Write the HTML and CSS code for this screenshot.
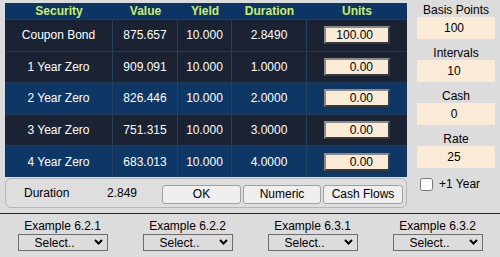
FILE: index.html
```html
<!DOCTYPE html>
<html lang="en">
<head>
    <meta charset="UTF-8">
    <meta name="viewport" content="width=device-width, initial-scale=1.0">
    <title>Duration</title>
    <link rel="stylesheet" href="styles.css">
</head>
<body>
    <div class="app">
        <div class="main">
            <div class="sheet">
                <div class="row head">
                    <div class="cell">Security</div>
                    <div class="cell">Value</div>
                    <div class="cell">Yield</div>
                    <div class="cell">Duration</div>
                    <div class="cell">Units</div>
                </div>
                <div class="row dark">
                    <div class="cell">Coupon Bond</div>
                    <div class="cell">875.657</div>
                    <div class="cell">10.000</div>
                    <div class="cell">2.8490</div>
                    <div class="cell"><input class="units" type="text" value="100.00"></div>
                </div>
                <div class="row dark">
                    <div class="cell">1 Year Zero</div>
                    <div class="cell">909.091</div>
                    <div class="cell">10.000</div>
                    <div class="cell">1.0000</div>
                    <div class="cell"><input class="units" type="text" value="0.00"></div>
                </div>
                <div class="row blue">
                    <div class="cell">2 Year Zero</div>
                    <div class="cell">826.446</div>
                    <div class="cell">10.000</div>
                    <div class="cell">2.0000</div>
                    <div class="cell"><input class="units" type="text" value="0.00"></div>
                </div>
                <div class="row dark">
                    <div class="cell">3 Year Zero</div>
                    <div class="cell">751.315</div>
                    <div class="cell">10.000</div>
                    <div class="cell">3.0000</div>
                    <div class="cell"><input class="units" type="text" value="0.00"></div>
                </div>
                <div class="row blue">
                    <div class="cell">4 Year Zero</div>
                    <div class="cell">683.013</div>
                    <div class="cell">10.000</div>
                    <div class="cell">4.0000</div>
                    <div class="cell"><input class="units" type="text" value="0.00"></div>
                </div>
            </div>
            <div class="bar">
                <span class="dur-label">Duration</span>
                <span class="dur-value">2.849</span>
                <div class="buttons">
                    <button type="button" class="btn ok">OK</button>
                    <button type="button" class="btn numeric">Numeric</button>
                    <button type="button" class="btn flows">Cash Flows</button>
                </div>
            </div>
        </div>

        <div class="side">
            <div class="field">
                <label for="bp">Basis Points</label>
                <input id="bp" class="box" type="text" value="100">
            </div>
            <div class="field">
                <label for="iv">Intervals</label>
                <input id="iv" class="box" type="text" value="10">
            </div>
            <div class="field">
                <label for="cash">Cash</label>
                <input id="cash" class="box" type="text" value="0">
            </div>
            <div class="field">
                <label for="rate">Rate</label>
                <input id="rate" class="box" type="text" value="25">
            </div>
            <label class="check"><input type="checkbox"><span>+1 Year</span></label>
        </div>
    </div>

    <div class="examples">
        <div class="example">
            <div class="ex-title">Example 6.2.1</div>
            <div class="pick">
                <select><option>Select..</option></select>
                <svg class="chev" width="9" height="6" viewBox="0 0 9 6"><polyline points="1,1 4.5,4.5 8,1" fill="none" stroke="#000" stroke-width="2"/></svg>
            </div>
        </div>
        <div class="example">
            <div class="ex-title">Example 6.2.2</div>
            <div class="pick">
                <select><option>Select..</option></select>
                <svg class="chev" width="9" height="6" viewBox="0 0 9 6"><polyline points="1,1 4.5,4.5 8,1" fill="none" stroke="#000" stroke-width="2"/></svg>
            </div>
        </div>
        <div class="example">
            <div class="ex-title">Example 6.3.1</div>
            <div class="pick">
                <select><option>Select..</option></select>
                <svg class="chev" width="9" height="6" viewBox="0 0 9 6"><polyline points="1,1 4.5,4.5 8,1" fill="none" stroke="#000" stroke-width="2"/></svg>
            </div>
        </div>
        <div class="example">
            <div class="ex-title">Example 6.3.2</div>
            <div class="pick">
                <select><option>Select..</option></select>
                <svg class="chev" width="9" height="6" viewBox="0 0 9 6"><polyline points="1,1 4.5,4.5 8,1" fill="none" stroke="#000" stroke-width="2"/></svg>
            </div>
        </div>
    </div>
</body>
</html>
```

FILE: styles.css
```css
body {
    margin: 0;
    padding: 0;
    background-color: #dcdcdc;
    color: #000;
    font-family: "Liberation Sans", Arial, sans-serif;
    font-size: 12px;
}
.app {
    display: flex;
    gap: 10px;
    padding: 3px 0 0 5px;
}
.main {
    width: 402px;
}
.sheet {
    display: flex;
    flex-direction: column;
    height: 174px;
}
.row {
    display: grid;
    grid-template-columns: 108px 65px 54px 75px 100px;
    flex: 1;
    color: #fff;
    font-size: 12px;
}
.row.head {
    flex: 0 0 16px;
    background: #0c3566;
    color: #ccee66;
    font-weight: bold;
}
.row.dark {
    background: #1b2332;
    border-top: 1px solid #233a58;
}
.row.blue {
    background: #0f3766;
    border-top: 1px solid #233a58;
}
.cell {
    display: flex;
    align-items: center;
    justify-content: center;
}
.row.dark .cell,
.row.blue .cell {
    border-right: 1px solid #253f60;
}
.row .cell:last-child {
    border-right: none;
}
.units {
    box-sizing: border-box;
    width: 66px;
    height: 18px;
    padding: 0 15px 0 0;
    border: 2px solid;
    border-color: #8a8a8a #3a3a3a #3a3a3a #8a8a8a;
    background: #faebd7;
    font-family: inherit;
    font-size: 12px;
    text-align: right;
    color: #000;
}
.bar {
    box-sizing: border-box;
    display: flex;
    align-items: center;
    height: 30px;
    margin-top: 1px;
    padding: 0 0 0 18px;
    border: 1px solid #b4b4b4;
    border-radius: 6px;
    background: #dedede;
}
.dur-label {
    width: 83px;
}
.dur-value {
    width: 55px;
}
.buttons {
    display: flex;
    gap: 2px;
    margin-top: 2px;
}
.btn {
    box-sizing: border-box;
    height: 19px;
    padding: 0;
    border: 1px solid #a0a0a0;
    border-radius: 3px;
    background: #efefef;
    font-family: inherit;
    font-size: 12px;
    color: #000;
}
.btn.ok {
    width: 79px;
}
.btn.numeric {
    width: 78px;
}
.btn.flows {
    width: 80px;
}
.side {
    display: flex;
    flex-direction: column;
    width: 78px;
}
.field {
    display: flex;
    flex-direction: column;
    margin-bottom: 7px;
}
.field label {
    line-height: 14px;
    text-align: center;
}
.box {
    box-sizing: border-box;
    height: 22px;
    width: 78px;
    padding: 0 4px 0 0;
    border: none;
    background: #faebd7;
    font-family: inherit;
    font-size: 12px;
    text-align: center;
    color: #000;
}
.check {
    display: flex;
    align-items: center;
    gap: 6px;
    margin-top: 3px;
    padding-left: 3px;
}
.check input {
    width: 13px;
    height: 13px;
    margin: 0;
}
.check span {
    margin-top: -2px;
}
.examples {
    display: grid;
    grid-template-columns: repeat(4, 125px);
    margin-top: 5px;
    padding-top: 5px;
    border-top: 1px solid #1c1c7c;
}
.example {
    display: flex;
    flex-direction: column;
    align-items: center;
}
.ex-title {
    line-height: 14px;
}
.pick {
    position: relative;
    width: 90px;
    margin-top: 1px;
}
.pick select {
    appearance: none;
    box-sizing: border-box;
    width: 100%;
    height: 17px;
    padding: 0 0 0 16px;
    border: 1px solid #6e6e6e;
    border-radius: 0;
    background: #dcdcdc;
    font-family: inherit;
    font-size: 12px;
    color: #000;
}
.chev {
    position: absolute;
    right: 5px;
    top: 5px;
    pointer-events: none;
}
```
